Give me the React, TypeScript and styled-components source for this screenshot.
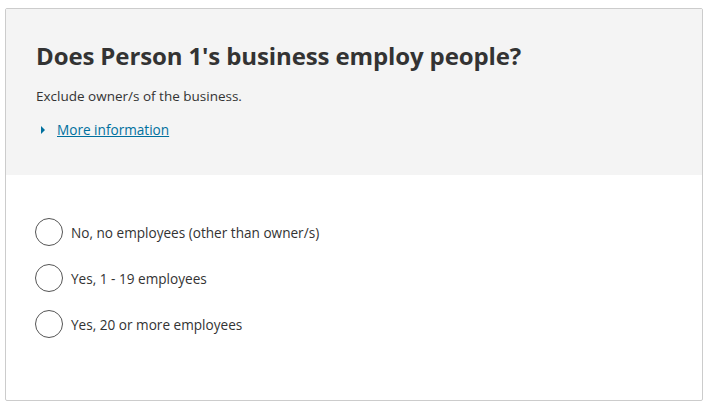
import React from "react";
import styled, { createGlobalStyle } from "styled-components";

const Global = createGlobalStyle`
  html, body { margin: 0; padding: 0; background: #fff; }
  body { font-family: "Open Sans", "Noto Sans", sans-serif; color: #333; }
`;

const Page = styled.div`
  padding: 8px 6px 0 5px;
`;

const Card = styled.div`
  border: 1px solid #cccccc;
  border-radius: 2px;
  height: 391px;
  display: flex;
  flex-direction: column;
  overflow: hidden;
`;

const Header = styled.div`
  background: #f4f4f4;
  height: 166px;
  box-sizing: border-box;
  padding: 30px 30px 0 30px;
`;

const Title = styled.h1`
  margin: 0;
  font-size: 24px;
  line-height: 34px;
  font-weight: 700;
  color: #333;
  letter-spacing: -0.12px;
`;

const Hint = styled.p`
  margin: 14px 0 0 0;
  font-size: 13.5px;
  line-height: 18px;
  color: #333;
`;

const Details = styled.div`
  margin-top: 16px;
  display: flex;
  align-items: center;
  gap: 12px;
  padding-left: 5px;
`;

const Caret = styled.span`
  width: 0;
  height: 0;
  border-top: 4px solid transparent;
  border-bottom: 4px solid transparent;
  border-left: 4px solid #00709e;
`;

const Link = styled.a`
  font-size: 13.6px;
  line-height: 18px;
  color: #00709e;
  text-decoration: underline;
  cursor: pointer;
`;

const Options = styled.div`
  padding: 43px 30px 0 29px;
  display: flex;
  flex-direction: column;
  gap: 18px;
`;

const Option = styled.label`
  display: flex;
  align-items: center;
  gap: 8px;
  font-size: 13.6px;
  color: #333;
  cursor: pointer;
`;

const Circle = styled.span`
  width: 28px;
  height: 28px;
  box-sizing: border-box;
  border: 1.5px solid #555;
  border-radius: 50%;
  background: #fff;
  flex: none;
`;

const options = [
  "No, no employees (other than owner/s)",
  "Yes, 1 - 19 employees",
  "Yes, 20 or more employees",
];

export default function App() {
  return (
    <>
      <Global />
      <Page>
        <Card>
          <Header>
            <Title>Does Person 1's business employ people?</Title>
            <Hint>Exclude owner/s of the business.</Hint>
            <Details>
              <Caret />
              <Link>More information</Link>
            </Details>
          </Header>
          <Options>
            {options.map((o) => (
              <Option key={o}>
                <Circle />
                {o}
              </Option>
            ))}
          </Options>
        </Card>
      </Page>
    </>
  );
}
